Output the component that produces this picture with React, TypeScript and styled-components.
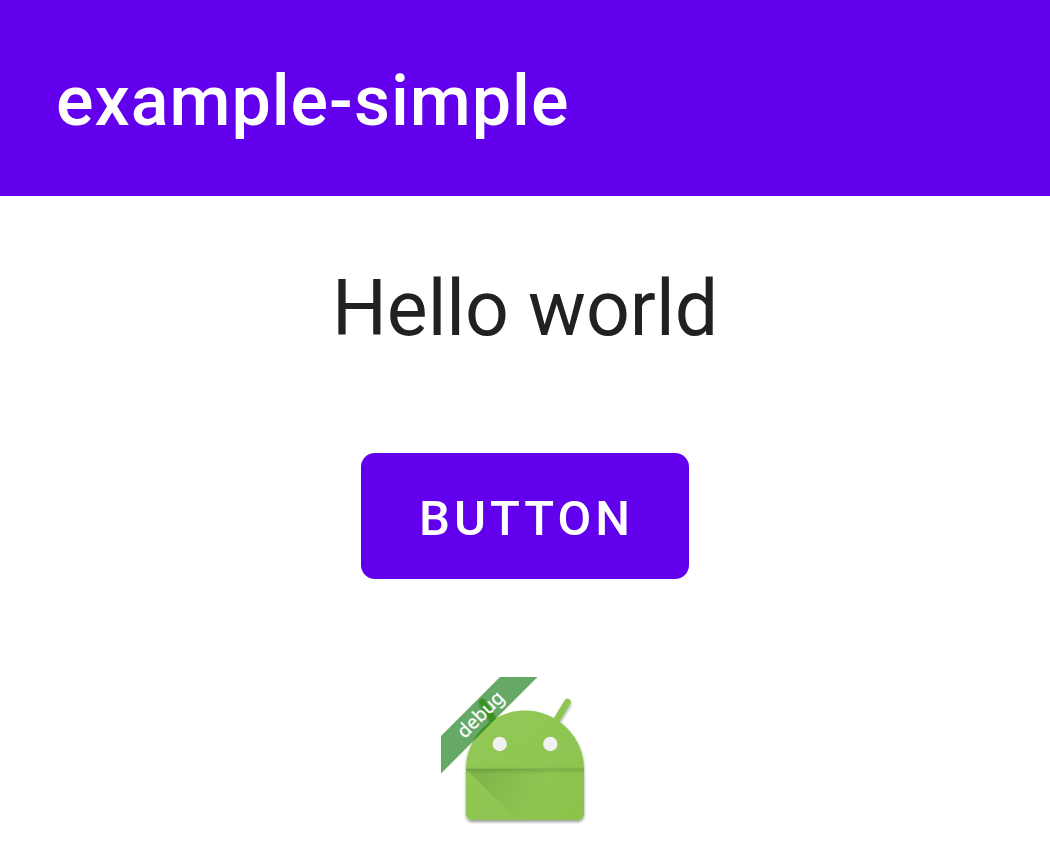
import React from 'react';
import styled, { createGlobalStyle } from 'styled-components';

const GlobalStyle = createGlobalStyle`
  body {
    margin: 0;
    background: #ffffff;
    color: #212121;
    font-family: Roboto, "Liberation Sans", sans-serif;
  }
`;

const AppBar = styled.header`
  display: flex;
  align-items: center;
  min-height: 196px;
  padding: 6px 56px 0;
  box-sizing: border-box;
  background: #6200ee;
  color: #ffffff;
`;

const Title = styled.h1`
  margin: 0;
  font-size: 70px;
  line-height: 84px;
  font-weight: 500;
  letter-spacing: 1px;
`;

const Content = styled.main`
  display: flex;
  flex-direction: column;
  align-items: center;
`;

const Greeting = styled.p`
  margin: 66px 0 96px;
  font-size: 77px;
  line-height: 95px;
`;

const ContainedButton = styled.button`
  min-height: 126px;
  margin: 0 0 98px;
  padding: 6px 55px 0 58px;
  border: 0;
  border-radius: 14px;
  background: #6200ee;
  color: #ffffff;
  font-family: inherit;
  font-size: 49px;
  line-height: 56px;
  font-weight: 500;
  letter-spacing: 4px;
  text-transform: uppercase;
`;

const LauncherIcon = styled.svg`
  display: block;
  width: 168px;
  height: 168px;
`;

const RibbonText = styled.text`
  font-family: "Noto Sans", sans-serif;
  font-size: 19px;
  fill: #ffffff;
  stroke: #ffffff;
  stroke-opacity: 0.3;
`;

function AndroidIcon() {
  return (
    <LauncherIcon viewBox="0 0 168 168" role="img" aria-label="App icon, debug build">
      <defs>
        <linearGradient id="body" x1="0" y1="0" x2="1" y2="1">
          <stop offset="0" stopColor="#93c956" />
          <stop offset="0.6" stopColor="#8fc652" />
          <stop offset="1" stopColor="#8bc34a" />
        </linearGradient>
        <linearGradient id="fold" gradientUnits="userSpaceOnUse" x1="36" y1="96" x2="92" y2="126">
          <stop offset="0" stopColor="#33691e" stopOpacity="0.2" />
          <stop offset="1" stopColor="#33691e" stopOpacity="0" />
        </linearGradient>
        <linearGradient id="crease" x1="0" y1="0" x2="0" y2="1">
          <stop offset="0" stopColor="#33691e" stopOpacity="0" />
          <stop offset="0.35" stopColor="#33691e" stopOpacity="0.24" />
          <stop offset="1" stopColor="#33691e" stopOpacity="0" />
        </linearGradient>
        <filter id="drop" x="-10%" y="-10%" width="120%" height="125%">
          <feDropShadow dx="0" dy="2" stdDeviation="1.5" floodColor="#000000" floodOpacity="0.4" />
        </filter>
      </defs>
      <g filter="url(#drop)">
        <path d="M41.500 25 53 44M126.500 25 115 44" stroke="#8fc652" strokeWidth="6.500" strokeLinecap="round" />
        <path
          d="M25 92a59 58.500 0 0 1 118 0v45a6 6 0 0 1-6 6h-106a6 6 0 0 1-6-6z"
          fill="url(#body)"
        />
      </g>
      <path d="M25 92h118v45a6 6 0 0 1-6 6H76z" fill="url(#fold)" />
      <rect x="25" y="90" width="118" height="7" fill="url(#crease)" />
      <circle cx="58.700" cy="67" r="7.200" fill="#f1f1f1" />
      <circle cx="109.300" cy="67" r="7.200" fill="#f1f1f1" />
      <path d="M59 0h37.500L0 96.500V59z" fill="#006e00" fillOpacity="0.6" />
      <RibbonText textAnchor="middle" transform="translate(44 42) rotate(-45)">
        debug
      </RibbonText>
    </LauncherIcon>
  );
}

export default function App() {
  return (
    <>
      <GlobalStyle />
      <AppBar>
        <Title>example-simple</Title>
      </AppBar>
      <Content>
        <Greeting>Hello world</Greeting>
        <ContainedButton type="button">Button</ContainedButton>
        <AndroidIcon />
      </Content>
    </>
  );
}
